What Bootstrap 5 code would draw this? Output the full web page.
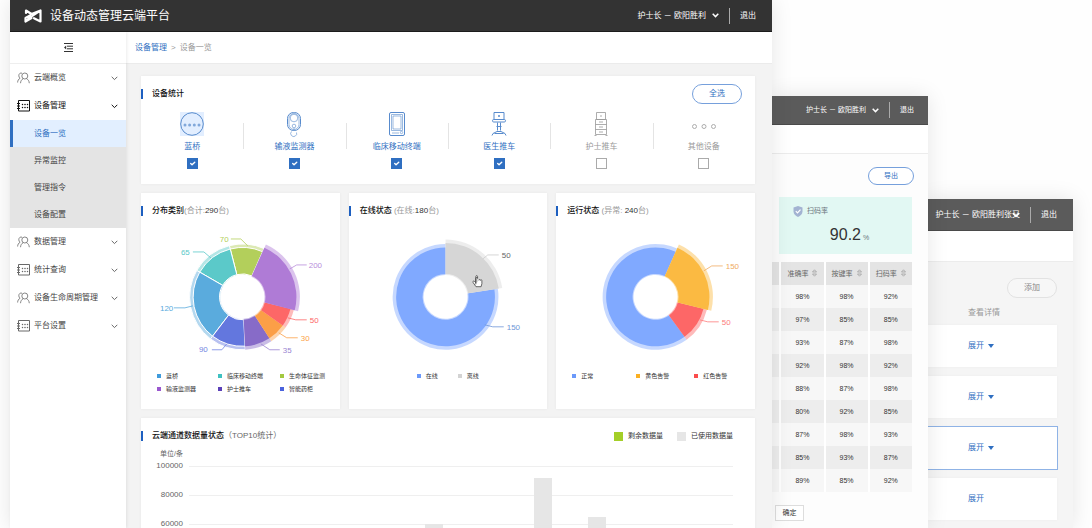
<!DOCTYPE html>
<html lang="zh-CN">
<head>
<meta charset="utf-8">
<meta name="viewport" content="width=device-width, initial-scale=1">
<title>设备动态管理云端平台</title>
<link href="https://cdn.jsdelivr.net/npm/bootstrap@5.3.0/dist/css/bootstrap.min.css" rel="stylesheet">
<style>
:root{--blue:#2f6fc1;--ink:#333;--muted:#999}
body{font-family:"Liberation Sans","Noto Sans CJK SC",sans-serif;font-size:8px;line-height:12px;color:var(--ink);background:#fefefe}
a{text-decoration:none;color:inherit}
svg{display:block;overflow:visible}
button{line-height:12px}
.stage{display:grid;grid-template-columns:762fr 156fr 145fr;padding:0 19px 0 10px}
.pane{box-shadow:0 0 20px rgba(0,0,0,.1);min-height:0;min-width:0}
.pane-main{z-index:3;background:#f3f3f3}
.pane-second{z-index:2;margin-top:96px;background:#fdfdfd;font-size:7px}
.pane-third{margin-top:199px;background:#f5f5f5}
.topbar{height:32px;background:#333;border-bottom:1px solid #1c1c1c;color:#fff;padding:0 16px 0 14px}
.pane-second .topbar{height:29px;padding-right:14px}
.pane-third .topbar{padding-left:0}
.pane-second .topbar,.pane-third .topbar{background:#5b5b5b;border-color:#4a4a4a}
.topbar button{background:none;border:0;padding:0;color:inherit;font-size:inherit;white-space:nowrap}
.who{gap:6px}
.brand{font-size:12px}
.rule{width:1px;height:16px;background:#aaa;margin:0 10px}
.body-row{min-height:0}
.scroller{overflow:auto;scrollbar-width:none}
.scroller::-webkit-scrollbar{display:none}
.side{width:116px;background:#fff;box-shadow:1px 0 3px rgba(0,0,0,.08)}
.fold{height:32px;border:0;border-bottom:1px solid #eee;background:#fff}
.side-link{height:28px;padding:0 8px 0 7px;gap:4px;color:#444}
.side-link.open{color:#111}
.side-link svg{opacity:.8}
.side-link.open svg{opacity:1}
.side-sub a{height:27px;padding-left:21px;border-left:3px solid #e4e4e4;background:#e4e4e4;color:#444}
.side-sub a.active{background:#e2efff;border-color:var(--blue);color:var(--blue)}
.crumbs{height:32px;background:#fff;border-bottom:1px solid #ebebeb;color:var(--muted);padding-left:9px}
.blue{color:var(--blue)}
.board{padding:12px 17px 0 15px;gap:9px}
.panel{background:#fff;box-shadow:0 0 3px rgba(0,0,0,.05)}
.panel-title{font-size:8px;font-weight:500;line-height:10px;border-left:2px solid #1d5fc0;padding-left:9px;margin:13px 0 0;color:#111}
.panel-title span{font-weight:400;color:var(--muted)}
.panel-title .dim{color:#666}
.panel-title b{font-weight:400;color:#333}
.pill{border:1px solid #76a0dc;border-radius:10px;height:20px;width:50px;padding:0;background:#fff;color:var(--blue)}
.stat-head{padding-right:13px}
.stats{padding-bottom:15px}
.pane-second .pill{height:18px;width:46px;font-size:7px}
.pill.plain{border-color:#e2e2e2;background:#f7f7f7;color:#888}
.kinds{display:grid;grid-template-columns:repeat(6,1fr)}
.kind{color:var(--blue);position:relative}
.kind+.kind::before{content:"";position:absolute;left:0;top:11px;width:1px;height:26px;background:#e4e4e4}
.kind.off{color:var(--muted)}
.kind span{margin:5px 0}
.kind svg{stroke:currentColor;fill:none;stroke-width:1;opacity:.8}
.kind .form-check-input{width:11px;height:11px;margin:0;border-radius:0;border-color:#aaa}
.kind .form-check-input:checked{background-color:var(--blue);border-color:var(--blue)}
.trio{display:grid;grid-template-columns:repeat(3,1fr);gap:9px}
.trio .panel{height:216px}
.donut text{font-size:8px}
.keys{display:grid;grid-template-columns:61px 62px 1fr;padding-left:16px;font-size:6px;line-height:13px;color:#333}
.keys.pair{grid-template-columns:41px 1fr;padding-left:68px}
.keys.alarm{grid-template-columns:64px 58px 1fr}
.keys li,.bar-keys li{display:flex;align-items:center}
.keys i{width:4px;height:4px;margin-right:5px}
.bar-keys{margin:12px 22px 0 0;font-size:7px}
.bar-keys ul{gap:14px}
.bar-keys i{width:9px;height:9px;margin-right:5px}
.yaxis{width:42px;color:#666}
.yaxis div{height:29px}
.unit{margin-top:6px;font-size:7px}
.plot{position:relative;height:146px;margin:6px 22px 30px 6px}
.lines div{height:29px;border-top:1px solid #efefef}
.bars{position:absolute;inset:0;display:grid;grid-template-columns:repeat(10,1fr);align-items:end;justify-items:center}
.bars div{width:18px;background:#e6e6e6}
.subbar{height:29px;background:#fff;border-bottom:1px solid #ececec}
.pane-third .subbar{height:31px}
.action{padding:13px 14px 0 0}
.rate{height:57px;background:#e2f8f3;margin:12px 16px 8px 7px;padding:8px 14px}
.rate strong{font-size:16px;line-height:20px;font-weight:400}
.rates-box{padding-right:16px}
.rates{table-layout:fixed;text-align:center;margin-bottom:13px}
.rates th,.rates td{height:23px;padding:0;border-right:2px solid #fff;font-weight:400;background:#f7f7f7;line-height:9px}
.rates tr>:last-child{border-right:0}
.rates th{background:#e4e4e4;color:#666}
.rates tbody tr:nth-child(even) td{background:#ededed}
.rates col:first-child{width:6%}
.rates col:last-child{width:31%}
.sort{display:inline-block;margin-left:2px;vertical-align:-1px}
.okay{border:1px solid #ddd;background:#fff;height:16px;width:29px;margin-left:3px;padding:0;font-size:7px;color:#333}
.more{padding:9px 0 6px 40px;color:var(--muted)}
.entries{gap:9px;padding-right:16px}
.entry{height:42px;background:#fff;padding-left:40px;color:var(--blue);box-shadow:0 0 3px rgba(0,0,0,.04)}
.entry.current{outline:1px solid #8fb3e6}
.caret{width:0;height:0;border:3px solid transparent;border-top:4px solid var(--blue);border-bottom:0}
.chev-over{position:absolute;right:0;top:3px}
</style>
</head>
<body>
<svg class="d-none" aria-hidden="true">
  <symbol id="chev" viewBox="0 0 7 5"><path d="M.7.8 3.5 3.6 6.3.8" fill="none" stroke="currentColor"/></symbol>
  <symbol id="people" viewBox="0 0 13 12"><g fill="none" stroke="currentColor" stroke-width=".8"><circle cx="7.800" cy="4" r="3"/><path d="M3.500 11.200c.2-2.300 1.200-3.700 2.600-4.500M9.500 6.700c1.600.8 2.600 2.200 2.800 4.500M5 1.200C3.300.6 1.800 1.800 1.800 3.700c0 1.200.5 2 1.300 2.500C1.500 7.200.7 8.500.6 10.500"/></g></symbol>
  <symbol id="device" viewBox="0 0 13 12"><path d="M1.500.5h11v10.500h-11zM0 3.500h3M0 6h3M0 8.500h3" fill="none" stroke="currentColor"/><path d="M5 4h1v1H5zM7.500 4h1v1h-1zM10 4h1v1h-1zM5 7h1v1H5zM7.500 7h1v1h-1zM10 7h1v1h-1z" fill="currentColor" stroke="currentColor" stroke-width=".3"/></symbol>
  <symbol id="updown" viewBox="0 0 5 8"><path d="M.5 3 2.500.8 4.500 3zM.5 5l2 2.200L4.500 5z" fill="none" stroke="#999" stroke-width=".7"/></symbol>
</svg>

<div class="stage vh-100 overflow-hidden">
  <div class="pane pane-main position-relative d-flex flex-column">
    <header class="topbar d-flex align-items-center flex-shrink-0">
      <svg class="me-2" width="18" height="14" viewBox="0 0 18 14" fill="none" stroke="#fff" stroke-width="2.200" stroke-linejoin="round" stroke-linecap="round"><path d="M2 4V1.500L7.500 5 16.500 1.500v11L10 9.200M6.800 7.800 1.500 12.500v-3.500L6 6.500M6.800 7.800 16 1.800M1.500 12.500 7.500 9"/></svg>
      <span class="brand me-auto">设备动态管理云端平台</span>
      <button class="who d-flex align-items-center" type="button">护士长 － 欧阳胜利 <svg width="7" height="5" stroke-width="1.500"><use href="#chev"/></svg></button>
      <span class="rule"></span>
      <button type="button">退出</button>
    </header>
    <div class="body-row d-flex flex-grow-1">
      <nav class="side flex-shrink-0 position-relative">
        <button class="fold w-100 d-flex align-items-center justify-content-center p-0" type="button" aria-label="收起菜单">
          <svg width="9" height="9" viewBox="0 0 9 9" fill="none" stroke="#333"><path d="M0 .5h9M3 3.200h6M3 5.800h6M0 8.500h9"/><path d="M2.200 2.500v4L0 4.500z" fill="#333" stroke="none"/></svg>
        </button>
        <a href="#" class="side-link d-flex align-items-center"><svg width="13" height="12"><use href="#people"/></svg><span class="flex-grow-1">云端概览</span><svg width="7" height="5"><use href="#chev"/></svg></a>
        <a href="#" class="side-link open d-flex align-items-center"><svg width="13" height="12"><use href="#device"/></svg><span class="flex-grow-1">设备管理</span><svg width="7" height="5"><use href="#chev"/></svg></a>
        <div class="side-sub">
          <a href="#" class="active d-flex align-items-center">设备一览</a>
          <a href="#" class="d-flex align-items-center">异常监控</a>
          <a href="#" class="d-flex align-items-center">管理指令</a>
          <a href="#" class="d-flex align-items-center">设备配置</a>
        </div>
        <a href="#" class="side-link d-flex align-items-center"><svg width="13" height="12"><use href="#people"/></svg><span class="flex-grow-1">数据管理</span><svg width="7" height="5"><use href="#chev"/></svg></a>
        <a href="#" class="side-link d-flex align-items-center"><svg width="13" height="12"><use href="#device"/></svg><span class="flex-grow-1">统计查询</span><svg width="7" height="5"><use href="#chev"/></svg></a>
        <a href="#" class="side-link d-flex align-items-center"><svg width="13" height="12"><use href="#people"/></svg><span class="flex-grow-1">设备生命周期管理</span><svg width="7" height="5"><use href="#chev"/></svg></a>
        <a href="#" class="side-link d-flex align-items-center"><svg width="13" height="12"><use href="#device"/></svg><span class="flex-grow-1">平台设置</span><svg width="7" height="5"><use href="#chev"/></svg></a>
      </nav>
      <main class="scroller flex-grow-1">
        <div class="crumbs d-flex align-items-center gap-1"><a href="#" class="blue">设备管理</a><span>&gt;</span><span>设备一览</span></div>
        <div class="board d-flex flex-column">
          <section class="panel stats">
            <div class="stat-head d-flex align-items-start">
              <h2 class="panel-title me-auto">设备统计</h2>
              <button class="pill mt-2" type="button">全选</button>
            </div>
            <div class="kinds mt-2">
              <label class="kind d-flex flex-column align-items-center">
                <svg width="24" height="24" viewBox="0 0 24 24"><path d="M0 0h24v24H0z" fill="#dcebff" stroke="none"/><circle cx="12" cy="12" r="11.300"/><g fill="currentColor" stroke="none" opacity=".7"><circle cx="5" cy="13" r="1.500"/><circle cx="9.600" cy="13" r="1.500"/><circle cx="14.300" cy="13" r="1.500"/><circle cx="19" cy="13" r="1.500"/></g></svg>
                <span>蓝桥</span><input class="form-check-input" type="checkbox" checked></label>
              <label class="kind d-flex flex-column align-items-center">
                <svg width="24" height="24" viewBox="0 0 24 24"><rect x="5.500" y=".5" width="13" height="18" rx="6"/><g stroke-width=".6"><rect x="7" y="1.500" width="10" height="16" rx="5"/><circle cx="12" cy="6" r="3.800"/><circle cx="12" cy="14" r="1.800"/><path d="M12 16v3M9.500 19.500a3 3 0 1 0 5 1"/></g></svg>
                <span>输液监测器</span><input class="form-check-input" type="checkbox" checked></label>
              <label class="kind d-flex flex-column align-items-center">
                <svg width="24" height="24" viewBox="0 0 24 24"><rect x="4.500" y=".5" width="15" height="23" rx="1.500"/><g stroke-width=".6"><path d="M6.500 2.500h11v16h-11zM8 4h8v13H8zM7 21h7"/><circle cx="16.500" cy="20.500" r="1.200"/></g></svg>
                <span>临床移动终端</span><input class="form-check-input" type="checkbox" checked></label>
              <label class="kind d-flex flex-column align-items-center">
                <svg width="24" height="24" viewBox="0 0 24 24"><path d="M7 .5h10v7H7zM11.500 3.500h1v1h-1zM10.500 10.500v8M13.500 10.500v8M9.500 14.500h5M5 23.500l1-2 4-2h4l4 2 1 2M7.500 21.500h9"/><rect x="5.500" y="7.500" width="13" height="2.500" rx="1.200"/></svg>
                <span>医生推车</span><input class="form-check-input" type="checkbox" checked></label>
              <label class="kind off d-flex flex-column align-items-center">
                <svg width="24" height="24" viewBox="0 0 24 24"><path d="M7.500.5h9v7h-9zM6.500 7.500h11v15h-11zM6.500 12.500h11M6.500 17.500h11M10 10h4M10 15h4M10 20h4M5.500 23.500h2M16.500 23.500h2M12 3v2"/></svg>
                <span>护士推车</span><input class="form-check-input" type="checkbox"></label>
              <label class="kind off d-flex flex-column align-items-center">
                <svg width="24" height="24" viewBox="0 0 24 24"><circle cx="2.500" cy="14.500" r="2"/><circle cx="12" cy="14.500" r="2"/><circle cx="21.500" cy="14.500" r="2"/></svg>
                <span>其他设备</span><input class="form-check-input" type="checkbox"></label>
            </div>
          </section>

          <div class="trio">
            <section class="panel">
              <h2 class="panel-title">分布类别<span>(合计:<b>290</b>台)</span></h2>
              <svg class="donut w-100 mt-2" id="types" viewBox="0 0 199 146"></svg>
              <ul class="keys list-unstyled mb-0">
                <li><i style="background:#3f9bdc"></i>蓝桥</li><li><i style="background:#3fc1c1"></i>临床移动终端</li><li><i style="background:#a4c940"></i>生命体征监测</li>
                <li><i style="background:#9a57cf"></i>输液监测器</li><li><i style="background:#5b40b8"></i>护士推车</li><li><i style="background:#4a62dd"></i>智能药柜</li>
              </ul>
            </section>
            <section class="panel">
              <h2 class="panel-title">在线状态 <span>(在线:<b>180</b>台)</span></h2>
              <svg class="donut w-100 mt-2" id="online" viewBox="0 0 199 146"></svg>
              <ul class="keys pair list-unstyled mb-0"><li><i style="background:#6b99fa"></i>在线</li><li><i style="background:#d3d3d3"></i>离线</li></ul>
            </section>
            <section class="panel">
              <h2 class="panel-title">运行状态 <span>(异常: <b>240</b>台)</span></h2>
              <svg class="donut w-100 mt-2" id="running" viewBox="0 0 199 146"></svg>
              <ul class="keys alarm list-unstyled mb-0"><li><i style="background:#6b99fa"></i>正常</li><li><i style="background:#fbb022"></i>黄色告警</li><li><i style="background:#fb4c4c"></i>红色告警</li></ul>
            </section>
          </div>

          <section class="panel">
            <div class="d-flex align-items-start">
              <h2 class="panel-title me-auto">云端通道数据量状态<span class="dim">（TOP10统计）</span></h2>
              <div class="bar-keys"><ul class="list-unstyled d-flex mb-0"><li><i style="background:#a4cf28"></i>剩余数据量</li><li><i style="background:#e6e6e6"></i>已使用数据量</li></ul></div>
            </div>
            <div class="yaxis unit text-end">单位/条</div>
            <div class="d-flex">
              <div class="yaxis text-end"><div>100000</div><div>80000</div><div>60000</div></div>
              <div class="plot flex-grow-1">
                <div class="lines"><div></div><div></div><div></div><div></div><div></div><div></div></div>
                <div class="bars"><div style="height:40%"></div><div style="height:30%"></div><div style="height:48%"></div><div style="height:36%"></div><div style="height:60%"></div><div style="height:52%"></div><div style="height:92%"></div><div style="height:65%"></div><div style="height:45%"></div><div style="height:38%"></div></div>
              </div>
            </div>
          </section>
        </div>
      </main>
    </div>
  </div>

  <div class="pane pane-second position-relative overflow-hidden">
    <header class="topbar d-flex align-items-center justify-content-end">
      <button class="who d-flex align-items-center" type="button">护士长 － 欧阳胜利 <svg width="7" height="5" stroke-width="1.500"><use href="#chev"/></svg></button>
      <span class="rule"></span>
      <button type="button">退出</button>
    </header>
    <div class="subbar"></div>
    <div class="action d-flex justify-content-end"><button class="pill" type="button">导出</button></div>
    <section class="rate">
      <div class="d-flex align-items-center gap-1 text-secondary"><svg width="10" height="11" viewBox="0 0 10 11"><path d="M5 0 9.500 1.500v4C9.500 8 7.500 10 5 11 2.500 10 .5 8 .5 5.500v-4z" fill="#a3b3d2"/><path d="m2.800 5.200 1.700 1.700 3-3.200" fill="none" stroke="#fff" stroke-width="1.200"/></svg>扫码率</div>
      <div class="text-center mt-2 ps-2"><strong>90.2</strong> <span class="text-secondary">%</span></div>
    </section>
    <div class="rates-box">
    <table class="rates w-100">
      <colgroup><col><col><col><col></colgroup>
      <thead><tr><th></th><th>准确率 <svg class="sort" width="5" height="8"><use href="#updown"/></svg></th><th>按键率 <svg class="sort" width="5" height="8"><use href="#updown"/></svg></th><th>扫码率 <svg class="sort" width="5" height="8"><use href="#updown"/></svg></th></tr></thead>
      <tbody>
        <tr><td></td><td>98%</td><td>98%</td><td>92%</td></tr>
        <tr><td></td><td>97%</td><td>85%</td><td>85%</td></tr>
        <tr><td></td><td>93%</td><td>87%</td><td>98%</td></tr>
        <tr><td></td><td>92%</td><td>98%</td><td>92%</td></tr>
        <tr><td></td><td>88%</td><td>87%</td><td>98%</td></tr>
        <tr><td></td><td>80%</td><td>92%</td><td>85%</td></tr>
        <tr><td></td><td>87%</td><td>98%</td><td>93%</td></tr>
        <tr><td></td><td>85%</td><td>93%</td><td>87%</td></tr>
        <tr><td></td><td>89%</td><td>85%</td><td>92%</td></tr>
      </tbody>
    </table>
    </div>
    <button class="okay" type="button">确定</button>
  </div>

  <div class="pane pane-third overflow-hidden">
    <header class="topbar d-flex align-items-center justify-content-end">
      <button class="position-relative" type="button">护士长 － 欧阳胜利张又<svg class="chev-over" width="8" height="6" stroke-width="1.500"><use href="#chev"/></svg></button>
      <span class="rule"></span>
      <button type="button">退出</button>
    </header>
    <div class="subbar"></div>
    <div class="d-flex justify-content-end mt-3 pe-3"><button class="pill plain" type="button">添加</button></div>
    <div class="more">查看详情</div>
    <div class="entries d-flex flex-column">
      <a href="#" class="entry d-flex align-items-center gap-1">展开<span class="caret"></span></a>
      <a href="#" class="entry d-flex align-items-center gap-1">展开<span class="caret"></span></a>
      <a href="#" class="entry current d-flex align-items-center gap-1">展开<span class="caret"></span></a>
      <a href="#" class="entry d-flex align-items-center gap-1">展开</a>
    </div>
  </div>
</div>
<script src="https://cdn.jsdelivr.net/npm/bootstrap@5.3.0/dist/js/bootstrap.bundle.min.js"></script>
<script>
// Ring sector between two angles (degrees clockwise from the top)
function sector(cx, cy, r1, r2, a, b) {
  const p = (r, d) => { const t = (d - 90) * Math.PI / 180; return (cx + r * Math.cos(t)).toFixed(2) + ' ' + (cy + r * Math.sin(t)).toFixed(2); };
  const big = b - a > 180 ? 1 : 0;
  return `M${p(r2, a)}A${r2} ${r2} 0 ${big} 1 ${p(r2, b)}L${p(r1, b)}A${r1} ${r1} 0 ${big} 0 ${p(r1, a)}Z`;
}
// slice: [from, to, colour, radius, white edge]; label: [text, x, y, colour, leader points]
function donut(id, cx, slices, labels, extra) {
  const cy = 73;
  let out = '';
  for (const [a, b, c, r, edge] of slices) {
    const s = edge ? ' stroke="#fff" stroke-width="1"' : '';
    out += `<path d="${sector(cx, cy, 22, r + 3.5, a, b)}" fill="${c}" opacity=".45"${s}/>`;
    out += `<path d="${sector(cx, cy, 23, r, a, b)}" fill="${c}"${s}/>`;
  }
  for (const [t, x, y, c, pts] of labels)
    out += `<polyline points="${pts}" fill="none" stroke="${c}" stroke-width=".8"/><text x="${x}" y="${y}" fill="${c}">${t}</text>`;
  document.getElementById(id).innerHTML = out + (extra || '');
}
donut('types', 101.7, [
  [-14.4, 24, '#b3cf5b', 49.5, 1], [-60, -14.4, '#5bc9c9', 49.5, 1], [217.3, 300, '#5aabdd', 49.5, 1],
  [177, 217.3, '#6377de', 49.5, 1], [147, 177, '#876bc8', 49.5], [125.5, 147, '#fb9f47', 49.5],
  [104, 125.5, '#fd6767', 49.5], [24, 104.5, '#af7bd6', 54]
], [
  ['70', 79, 18, '#b3cf5b', '90,15 100,15 107,22'], ['65', 40, 31, '#5bc9c9', '52,28 63,28 70,34'],
  ['200', 168, 44, '#b98ddb', '149,45 156,41 166,41'], ['50', 169, 99, '#fd6767', '147,94 155,96 166,96'],
  ['30', 160, 117, '#fb9f47', '138,109 146,114 157,114'], ['35', 142, 129, '#9a83d2', '120,120 129,126 139,126'],
  ['90', 58, 128, '#7385e2', '71,126 81,126 86,120'], ['120', 19, 87, '#5aabdd', '33,84 44,84 52,82']
]);
donut('online', 96.7, [[81, 360, '#80a9ff', 49.5], [0, 81, '#d6d6d6', 54]], [
  ['50', 153, 34, '#666', '139,31 139,31'], ['150', 158, 106, '#6f96d8', '136,101 144,103 155,103']
], '<polyline points="134,35 139,31 150,31" fill="none" stroke="#ccc" stroke-width=".8"/><path d="M127 60.500v-6c0-1.400 1.800-1.400 1.800 0V52.700c0-1.400-1.800-1.400-1.800 0v6l-1.500-1.300c-1-.7-1.900.4-1.200 1.200l2.900 4.200h5.100l.8-3v-3.100c0-1.200-1.500-1.200-1.600-.2-.1-1.100-1.500-1.100-1.600-.2" fill="#fff" stroke="#444" stroke-width=".8"/>');
donut('running', 99.7, [[144, 384, '#80a9ff', 49.5], [104, 144, '#fd6767', 49.5], [24, 104, '#fbba42', 54]], [
  ['150', 170, 45, '#f0ab62', '148,47 156,42 167,42'], ['50', 166, 101, '#fd7c7c', '144,96 152,98 163,98']
]);
</script>
</body>
</html>
